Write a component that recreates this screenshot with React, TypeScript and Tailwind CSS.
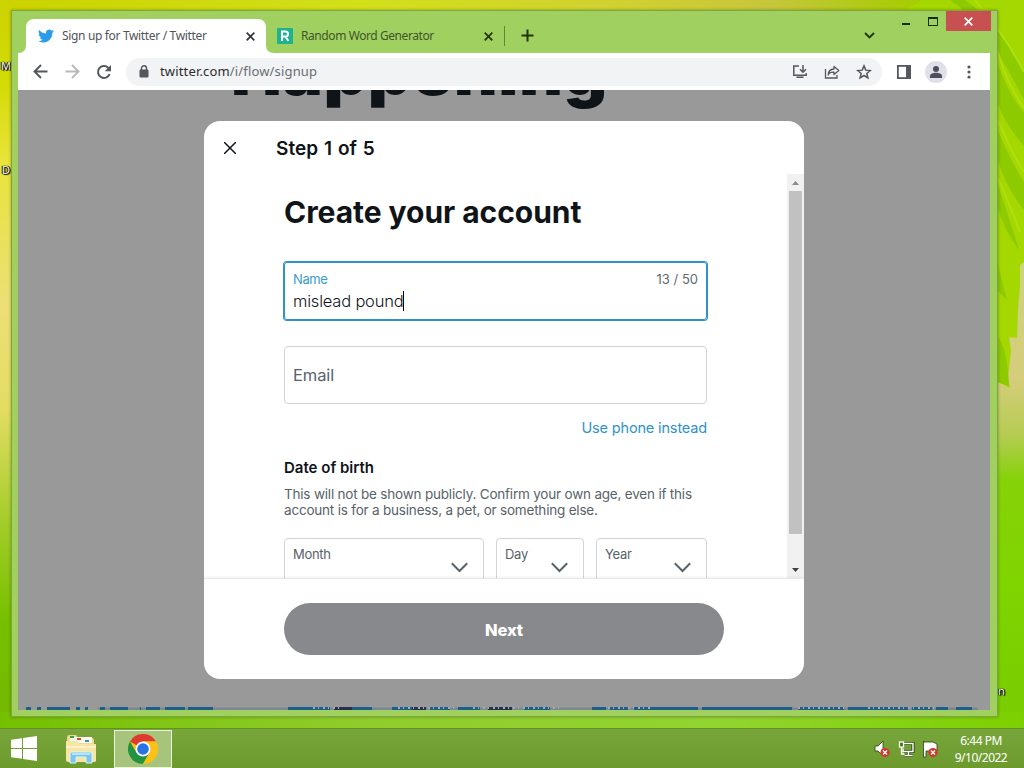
import React from 'react';
import clsx from 'clsx';

const UI = 'font-["Noto_Sans","Open_Sans",sans-serif]';

export default function App() {
  return (
    <div className="relative flex h-[768px] w-[1024px] flex-col overflow-hidden bg-[#7fc800]">
      <Wallpaper />
      <main className="relative flex-1">
        <DesktopLabel className="left-px top-[59px]">M</DesktopLabel>
        <DesktopLabel className="left-0.5 top-[163px]">D</DesktopLabel>
        <DesktopLabel className="left-[998px] top-[684px]">n</DesktopLabel>
        <BrowserWindow />
      </main>
      <Taskbar />
    </div>
  );
}

function Wallpaper() {
  return (
    <svg className="absolute inset-0" width="1024" height="768" viewBox="0 0 1024 768">
      <defs>
        <linearGradient id="top" x1="0" x2="1" y1="0" y2="0">
          <stop offset="0" stopColor="#c9d300" />
          <stop offset="0.35" stopColor="#d2e01a" />
          <stop offset="0.62" stopColor="#cfd032" />
          <stop offset="0.75" stopColor="#c6c63c" />
          <stop offset="0.88" stopColor="#a8cc08" />
          <stop offset="1" stopColor="#93d200" />
        </linearGradient>
        <linearGradient id="left" x1="0" x2="0" y1="0" y2="1">
          <stop offset="0" stopColor="#ccd300" />
          <stop offset="0.12" stopColor="#d4dc08" />
          <stop offset="0.22" stopColor="#e9e33a" />
          <stop offset="0.42" stopColor="#ecdf76" />
          <stop offset="0.56" stopColor="#e3dd63" />
          <stop offset="0.72" stopColor="#a3cc28" />
          <stop offset="0.85" stopColor="#77c000" />
          <stop offset="1" stopColor="#72b800" />
        </linearGradient>
        <linearGradient id="right" x1="0" x2="0" y1="0" y2="1">
          <stop offset="0" stopColor="#bccb4a" />
          <stop offset="0.35" stopColor="#cbd37e" />
          <stop offset="0.52" stopColor="#d5cd7c" />
          <stop offset="0.6" stopColor="#b4cc50" />
          <stop offset="0.66" stopColor="#86d208" />
          <stop offset="0.8" stopColor="#80d400" />
          <stop offset="1" stopColor="#78cc00" />
        </linearGradient>
        <linearGradient id="bottom" x1="0" x2="1" y1="0" y2="0">
          <stop offset="0" stopColor="#74c000" />
          <stop offset="0.35" stopColor="#90cc2c" />
          <stop offset="0.7" stopColor="#92d430" />
          <stop offset="1" stopColor="#7dd000" />
        </linearGradient>
      </defs>
      <rect width="1024" height="12" fill="url(#top)" />
      <rect width="40" height="728" y="0" fill="url(#left)" />
      <rect x="980" width="44" height="728" fill="url(#right)" />
      <rect y="712" width="1024" height="56" fill="url(#bottom)" />
      {/* leaf along the right edge */}
      <path d="M905 10 L922 0 H1024 V262 L1020 265 L1020 285 L1018 310 L1017 338 L1009 337 L1011 350 L1008 378 L1010 388 L998 382 V10Z" fill="#a5d800" />
      <g fill="#8dca00">
        <path d="M950 0 Q985 22 1024 100 V70 Q995 20 965 0Z" />
        <path d="M997 62 Q1010 98 1024 112 V146 Q1006 126 997 102Z" />
        <path d="M997 128 Q1010 160 1024 182 V210 Q1007 190 997 158Z" />
        <path d="M997 182 Q1005 205 1019 250 Q1005 232 997 206Z" />
        <path d="M997 260 Q1003 285 1007 300 L997 290Z" />
        <path d="M997 336 Q1007 345 1009 386 L997 382Z" />
      </g>
      <g stroke="#aee010" strokeWidth="2" fill="none">
        <path d="M975 0 Q1005 35 1024 72" />
        <path d="M997 50 Q1008 86 1024 108" />
        <path d="M997 118 Q1010 150 1024 172" />
        <path d="M997 176 Q1008 200 1020 232" />
      </g>
    </svg>
  );
}

function DesktopLabel({ className, children }: { className: string; children: React.ReactNode }) {
  return (
    <span className={clsx('absolute text-[11px] leading-[14px] text-white [text-shadow:0_0_1px_#000,1px_1px_1px_#000,-1px_0_1px_#000,1px_0_1px_#000]', UI, className)}>
      {children}
    </span>
  );
}

function BrowserWindow() {
  return (
    <section className="absolute left-[11px] top-2.5 flex h-[707px] w-[987px] flex-col border border-[#7fa63c] bg-[#a0d060] pb-1.5 pl-1.5 pr-[7px] shadow-[0_0_3px_rgba(0,0,0,0.3)]">
      <TabStrip />
      <Toolbar />
      <Page />
    </section>
  );
}

function TabStrip() {
  return (
    <div className={clsx('relative flex h-[42px] shrink-0 items-end pl-2 text-[#50545a]', UI)}>
      <div className="relative flex h-[34px] w-60 items-center rounded-t-lg bg-white pl-3">
        <svg className="absolute -left-2 bottom-0" width="8" height="8"><path d="M8 0 V8 H0 Q8 8 8 0Z" fill="#fff" /></svg>
        <svg className="absolute -right-2 bottom-0" width="8" height="8"><path d="M0 0 V8 H8 Q0 8 0 0Z" fill="#fff" /></svg>
        <TwitterBird />
        <span className="ml-2 flex-1 whitespace-nowrap text-xs tracking-[-0.34px]">Sign up for Twitter / Twitter</span>
        <Cross className="mr-[11px] size-[9px] text-[#33363a]" />
      </div>
      <div className="flex h-[34px] w-[238px] items-center pl-[11px] text-[#41552a]">
        <svg width="16" height="16" viewBox="0 0 16 16">
          <rect width="16" height="16" rx="1" fill="#1fb28e" />
          <path d="M5 13V3.500h3.500a2.400 2.400 0 0 1 0 5H5M8.300 8.500 11.500 13" fill="none" stroke="#fff" strokeWidth="2" />
        </svg>
        <span className="ml-2 flex-1 whitespace-nowrap text-xs tracking-[-0.42px]">Random Word Generator</span>
        <Cross className="mr-[11px] size-[9px] text-[#1f3306]" />
      </div>
      <span className="mb-[7px] h-5 w-px bg-[#628536]" />
      <svg className="mb-[11px] ml-4 text-[#1f3306]" width="13" height="13" viewBox="0 0 13 13"><path d="M6.500 0.500v12M0.500 6.500h12" stroke="currentColor" strokeWidth="2" /></svg>
      <svg className="mb-3 ml-[330px] text-[#1f3306]" width="11" height="11" viewBox="0 0 11 11"><path d="m1 3 4.500 4.500L10 3" fill="none" stroke="currentColor" strokeWidth="1.800" /></svg>
      <WindowButtons />
    </div>
  );
}

function WindowButtons() {
  return (
    <div className="absolute -right-px top-0 flex h-5 items-center">
      <svg width="90" height="20" viewBox="0 0 90 20" shapeRendering="crispEdges">
        <rect x="46" y="12" width="8" height="2" fill="#143000" />
        <rect x="72" y="6" width="10" height="9" fill="#143000" />
        <rect x="73" y="8" width="8" height="6" fill="#a0d060" />
      </svg>
      <div className="flex h-5 w-[45px] items-center justify-center bg-[#c75050] text-white">
        <Cross className="size-[9px]" />
      </div>
    </div>
  );
}

function Toolbar() {
  return (
    <div className="flex h-[37px] shrink-0 items-center bg-white text-[#54575b]">
      <svg className="ml-[15px]" width="15" height="15" viewBox="0 0 15 15"><path d="M14.500 7.500H1.500M8 1 1.500 7.500 8 14" fill="none" stroke="currentColor" strokeWidth="1.900" /></svg>
      <svg className="ml-[17px] text-[#b7b9bb]" width="15" height="15" viewBox="0 0 15 15"><path d="M0.500 7.500h13M7 1l6.500 6.500L7 14" fill="none" stroke="currentColor" strokeWidth="1.900" /></svg>
      <svg className="ml-4" width="16" height="16" viewBox="0 0 16 16"><path d="M13.600 10.200A6 6 0 1 1 12.200 3.700L14 5.500" fill="none" stroke="currentColor" strokeWidth="2" /><path d="M15 1v6.200H8.800z" fill="currentColor" /></svg>
      <div className="ml-[14px] flex h-7 w-[756px] shrink-0 items-center rounded-full bg-[#f1f3f4] pl-[13px]">
        <svg width="10" height="13" viewBox="0 0 10 13"><rect x="0.500" y="4.500" width="9" height="8" rx="1" fill="currentColor" /><path d="M2.500 5V3.200a2.500 2.500 0 0 1 5 0V5" fill="none" stroke="currentColor" strokeWidth="1.400" /></svg>
        <span className={clsx('ml-[11px] flex-1 whitespace-nowrap text-[13px] tracking-[0.16px] text-[#6a6e72]', UI)}>
          <span className="text-[#2c2d30]">twitter.com</span>/i/flow/signup
        </span>
        <svg width="16" height="16" viewBox="0 0 16 16" fill="none" stroke="currentColor" strokeWidth="1.500"><path d="M7 2H1.800v9.300h12.400V9M4.500 13.300h7" /><path d="M11 1v7M8 5.300l3 3 3-3" /></svg>
        <svg className="ml-4" width="16" height="16" viewBox="0 0 16 16" fill="none" stroke="currentColor" strokeWidth="1.300"><path d="M1.500 5v9h11.500v-3" /><path d="M10 2.500 14.800 6.600 10 10.500V8.200C7 8.100 5 9 4.200 11 4.300 7.500 6.500 5.200 10 5z" strokeLinejoin="round" /></svg>
        <svg className="ml-4 mr-2.5" width="16" height="16" viewBox="0 0 16 16"><path d="m8 1.900 1.750 4.250 4.550.35-3.500 2.950 1.100 4.450L8 11.500l-3.900 2.400 1.100-4.450L1.700 6.500l4.550-.35z" fill="none" stroke="currentColor" strokeWidth="1.500" /></svg>
      </div>
      <svg className="ml-[15px]" width="14" height="14" viewBox="0 0 14 14"><rect x="0.900" y="0.900" width="12.200" height="12.200" fill="none" stroke="currentColor" strokeWidth="1.800" /><rect x="9" y="1" width="4.500" height="12" fill="currentColor" /></svg>
      <div className="ml-3.5 flex size-[22px] items-center justify-center rounded-full bg-[#dfe0e8]">
        <svg width="14" height="14" viewBox="0 0 14 14" fill="#4b4e5c"><circle cx="7" cy="4" r="3" /><path d="M1 13v-2c0-2 3-3.200 6-3.200s6 1.200 6 3.200v2z" /></svg>
      </div>
      <svg className="ml-5" width="4" height="14" viewBox="0 0 4 14" fill="currentColor"><circle cx="2" cy="2" r="1.600" /><circle cx="2" cy="7" r="1.600" /><circle cx="2" cy="12" r="1.600" /></svg>
    </div>
  );
}

function Page() {
  return (
    <div className="relative flex h-[620px] shrink-0 items-center justify-center overflow-hidden bg-[#999999]">
      <div className="absolute left-[213px] top-[-60px] origin-left scale-x-[1.06] whitespace-nowrap font-['Inter'] text-[64px] font-black leading-[84px] tracking-[0.500px] text-[#0f1419]">
        Happening
      </div>
      <PageBottomEdge />
      <SignupModal />
    </div>
  );
}

/* sliver of the footer artwork showing under the dimmed page */
const EDGE = [
  [8, 5], [19, 4], [29, 23], [58, 4], [67, 3], [82, 5], [92, 18], [122, 1], [128, 14], [147, 20], [170, 25],
  [270, 42], [316, 18], [334, 20], [374, 20], [394, 14], [412, 20], [440, 22], [470, 24], [506, 26],
  [574, 14], [592, 18], [616, 22], [638, 42], [684, 90], [780, 46], [830, 60], [894, 20], [918, 12], [938, 16],
];

function PageBottomEdge() {
  return (
    <svg className="absolute bottom-0 left-0" width="972" height="4" viewBox="0 0 972 4">
      <rect x="80" y="1.500" width="880" height="2.500" fill="#7b8794" />
      {EDGE.map(([x, w], i) => (
        <rect key={x} x={x} y="1" width={w} height="3" fill={i > 10 && i < 20 && i % 3 === 0 ? '#25314f' : '#1d5e8c'} />
      ))}
      <path d="M295 2h30M380 2h60M455 2h90M590 2h42M780 2h50M850 2h70" stroke="#a6a9ad" strokeWidth="2" strokeDasharray="2 3 1 4" />
    </svg>
  );
}

function SignupModal() {
  return (
    <div className="relative flex h-[558px] w-[600px] flex-col overflow-hidden rounded-2xl bg-white font-['Inter'] text-[#0f1419]">
      <header className="flex h-[53px] shrink-0 items-center pl-5">
        <svg width="12" height="12" viewBox="0 0 12 12"><path d="m0 0 12 12M12 0 0 12" stroke="currentColor" strokeWidth="1.500" /></svg>
        <h2 className="ml-10 pt-[3px] text-[19px] font-semibold tracking-[0.05px] [word-spacing:1px]">Step 1 of 5</h2>
      </header>
      <div className="flex h-[404px] shrink-0 overflow-hidden">
        <SignupForm />
        <Scrollbar />
      </div>
      <footer className="flex-1 border-t border-[#e6e8e9] px-20 pt-6 shadow-[0_0_3px_rgba(0,0,0,0.1)]">
        <button className="h-[52px] w-full rounded-full bg-[#87898c] pt-0.5 text-[16.500px] font-extrabold tracking-[-0.1px] text-white">Next</button>
      </footer>
    </div>
  );
}

function SignupForm() {
  return (
    <form className="min-w-0 flex-1 px-20 pt-5">
      <h1 className="whitespace-nowrap text-[30px] font-bold leading-9 tracking-[-0.05px]">Create your account</h1>
      <div className="mt-8 h-[58px] rounded-[3px] border border-[#2f92c5] px-2 pt-2 ring-1 ring-[#2f92c5]">
        <div className="flex justify-between text-[13px] leading-4">
          <span className="tracking-[-0.4px] text-[#3c9bcb]">Name</span>
          <span className="text-[#61696f]">13 / 50</span>
        </div>
        <div className="mt-[3px] flex items-center text-[16.500px] font-light leading-[22px] tracking-[-0.2px] text-[#0f1419]">
          <span className="whitespace-nowrap">mislead pound</span>
          <span className="h-5 w-px bg-black" />
        </div>
      </div>
      <div className="mt-[26px] flex h-[58px] items-center rounded border border-[#cfd4d7] px-2 text-[16.500px] tracking-[-0.1px] text-[#586269]">Email</div>
      <p className="mt-3.5 text-right text-[14.500px] leading-5 tracking-[-0.15px] text-[#2f93c7]">Use phone instead</p>
      <h3 className="mt-5 whitespace-nowrap text-[15px] font-semibold leading-5">Date of birth</h3>
      <p className="mt-2 text-[13.500px] leading-4 tracking-[-0.2px] text-[#586269]">
        <span className="block whitespace-nowrap">This will not be shown publicly. Confirm your own age, even if this</span>
        <span className="block whitespace-nowrap">account is for a business, a pet, or something else.</span>
      </p>
      <div className="mt-5 flex gap-3">
        <Select label="Month" className="w-[200px]" />
        <Select label="Day" className="w-[88px]" />
        <Select label="Year" className="w-[111px]" />
      </div>
    </form>
  );
}

function Select({ label, className }: { label: string; className: string }) {
  return (
    <div className={clsx('flex h-[58px] shrink-0 justify-between rounded border border-[#cfd4d7] pl-2 pr-[15px] pt-[7px] text-[13px] leading-4 tracking-[-0.3px] text-[#586269]', className)}>
      <span>{label}</span>
      <svg className="mt-4" width="17" height="11" viewBox="0 0 17 11"><path d="m0.800 1.300 7.700 7.700 7.700-7.700" fill="none" stroke="currentColor" strokeWidth="2" /></svg>
    </div>
  );
}

function Scrollbar() {
  return (
    <div className="flex w-[17px] shrink-0 flex-col items-center bg-[#f1f1f1]">
      <svg className="shrink-0" width="17" height="17" viewBox="0 0 17 17"><path d="M5 11h7L8.500 7z" fill="#8b8b8b" /></svg>
      <div className="h-[343px] w-[13px] bg-[#c1c1c1]" />
      <svg className="mt-auto shrink-0" width="17" height="17" viewBox="0 0 17 17"><path d="M5 7h7l-3.500 4z" fill="#404040" /></svg>
    </div>
  );
}

function Taskbar() {
  return (
    <footer className={clsx('relative flex h-10 shrink-0 items-center border-t border-[#628f26] bg-gradient-to-b from-[#79a63a] to-[#6d9a2d] text-white', UI)}>
      <svg className="ml-[11px]" width="26" height="25" viewBox="0 0 26 25" fill="#fff">
        <path d="M0 3.800 11 2.300V12H0zM12 2.100 26 0v12H12zM0 13h11v9.700L0 21.200zM12 13h14v12l-14-2.100z" />
      </svg>
      <FolderIcon />
      <div className="ml-[17px] flex h-[38px] w-[58px] items-center justify-center border border-[#e9f3d5] bg-[#a7c47d]">
        <ChromeIcon />
      </div>
      <div className="ml-auto flex items-center">
        <TrayIcons />
        <div className="ml-[13px] mr-[15px] flex w-[56px] flex-col items-center whitespace-nowrap text-xs leading-[17px] tracking-[-0.5px]">
          <span>6:44 PM</span>
          <span>9/10/2022</span>
        </div>
      </div>
    </footer>
  );
}

function FolderIcon() {
  return (
    <svg className="ml-7" width="32" height="30" viewBox="0 0 32 30">
      <path d="M2 3.500Q2 1 4 1h7l2 3h14q2 0 2 2v20H2z" fill="#f0d88a" />
      <path d="M5 3h22v6H5z" fill="#fdfaf0" />
      <path d="M5 2h4v2H5z" fill="#3e9e48" />
      <path d="M12 4h4v2h-4z" fill="#d9462c" />
      <path d="M20 6h4v2h-4z" fill="#3b8fc4" />
      <path d="M1 7h11l3 3h16v17Q31 28 29 28H3Q1 28 1 26z" fill="#f7e5a3" />
      <path d="M1 12h30v2H1z" fill="#fcf2c9" />
      <path d="M5 29V20q0-2 2-2h18q2 0 2 2v9h-6v-6H11v6z" fill="#79c7ea" stroke="#d9f2fd" />
      <path d="M7 20h18" stroke="#b9e4f7" strokeWidth="2" />
    </svg>
  );
}

function ChromeIcon() {
  return (
    <svg width="30" height="30" viewBox="0 0 30 30">
      <circle cx="15" cy="15" r="15" fill="#fbc116" />
      <path d="M15 15 2 7.500A15 15 0 0 1 28 7.500H15z" fill="#dd3b30" />
      <path d="M2 7.500A15 15 0 0 0 15 30l6.500-11.300L15 15 8.500 18.700z" fill="#229342" />
      <path d="M15 7.500h13a15 15 0 0 1-13 22.500l6.500-11.250z" fill="#fbc116" />
      <circle cx="15" cy="15" r="7.500" fill="#fff" />
      <circle cx="15" cy="15" r="5.800" fill="#2a73e4" />
    </svg>
  );
}

function TrayIcons() {
  return (
    <svg width="66" height="18" viewBox="0 0 66 18">
      <g stroke="#29400c" strokeWidth="0.800">
        <path d="M1 6h3l5-5v15l-5-5H1z" fill="#fff" />
        <path d="M50 2h9l4 2v7h-11v6h-2.500V1z" fill="#fff" />
      </g>
      <g transform="translate(-1 0)">
        <path d="M31 3.500h9v8h-9M35.500 12v3M31.500 15.500h8" stroke="#2f4714" strokeWidth="3.200" fill="none" />
        <path d="M31 3.500h9v8h-10v-3M35.500 12v3M31.500 15.500h8" stroke="#fff" strokeWidth="1.400" fill="none" />
        <rect x="26.500" y="2" width="4" height="5" fill="#4a6720" stroke="#fff" strokeWidth="1.300" />
        <path d="M28.500 7v7h3" stroke="#fff" strokeWidth="1.300" fill="none" />
      </g>
      {[11, 59].map((cx) => (
        <g key={cx}>
          <circle cx={cx} cy="12.500" r="4.600" fill="#d5352d" />
          <path d={`m${cx - 2} 10.500 4 4m0-4-4 4`} stroke="#fff" strokeWidth="1.400" />
        </g>
      ))}
    </svg>
  );
}

function Cross({ className }: { className?: string }) {
  return (
    <svg className={clsx('shrink-0', className)} viewBox="0 0 9 9">
      <path d="m0.700 0.700 7.600 7.600m0-7.600L0.700 8.300" stroke="currentColor" strokeWidth="1.700" />
    </svg>
  );
}

function TwitterBird() {
  return (
    <svg width="16" height="16" viewBox="0 0 24 24" fill="#2e9be8">
      <path d="M23.953 4.570a10 10 0 0 1-2.825.775 4.958 4.958 0 0 0 2.163-2.723c-.951.555-2.005.959-3.127 1.184a4.920 4.920 0 0 0-8.384 4.482C7.690 8.095 4.067 6.130 1.640 3.162a4.822 4.822 0 0 0-.666 2.475c0 1.710.870 3.213 2.188 4.096a4.904 4.904 0 0 1-2.228-.616v.060a4.923 4.923 0 0 0 3.946 4.827 4.996 4.996 0 0 1-2.212.085 4.936 4.936 0 0 0 4.604 3.417 9.867 9.867 0 0 1-6.102 2.105c-.390 0-.779-.023-1.170-.067a13.995 13.995 0 0 0 7.557 2.209c9.053 0 13.998-7.496 13.998-13.985 0-.210 0-.420-.015-.630a9.935 9.935 0 0 0 2.460-2.548z" />
    </svg>
  );
}
